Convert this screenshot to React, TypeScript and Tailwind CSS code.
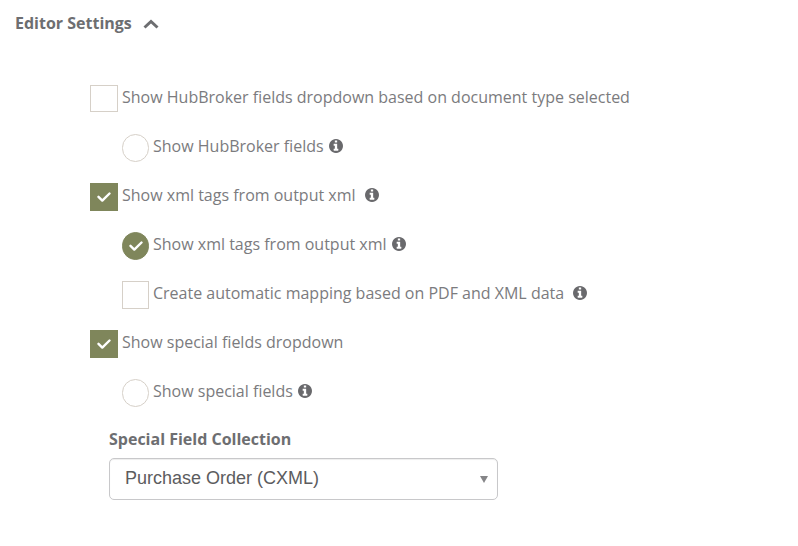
import { useState } from 'react'

type OptionProps = {
  id: string
  label: string
  type?: 'checkbox' | 'radio'
  checked: boolean
  onChange: () => void
  nested?: boolean
  info?: 'near' | 'far'
}

function InfoIcon() {
  return (
    <svg viewBox="0 128 1536 1536" className="size-3.5" fill="#69696c">
      <path d="M1024 1376v-160q0-14-9-23t-23-9h-96v-512q0-14-9-23t-23-9h-320q-14 0-23 9t-9 23v160q0 14 9 23t23 9h96v320h-96q-14 0-23 9t-9 23v160q0 14 9 23t23 9h448q14 0 23-9t9-23zm-128-896v-160q0-14-9-23t-23-9h-192q-14 0-23 9t-9 23v160q0 14 9 23t23 9h192q14 0 23-9t9-23zm640 416q0 209-103 385.5t-279.5 279.5-385.5 103-385.5-103-279.5-279.5-103-385.5 103-385.5 279.5-279.5 385.5-103 385.5 103 279.5 279.5 103 385.5z" />
    </svg>
  )
}

function Option({ id, label, type = 'checkbox', checked, onChange, nested, info }: OptionProps) {
  return (
    <div className={`flex h-[49px] items-start ${nested ? 'pl-8' : ''}`}>
      <span className="mt-0.5 grid shrink-0 place-items-center">
        <input
          id={id}
          type={type}
          name={type === 'radio' ? 'field-source' : id}
          checked={checked}
          onChange={onChange}
          className={`col-start-1 row-start-1 appearance-none border border-[#d6d0c8] bg-white checked:h-7 checked:border-[#7f865b] checked:bg-[#7f865b] ${nested ? 'h-7 w-[27px]' : 'h-[27px] w-7'} ${type === 'radio' ? 'rounded-full' : ''}`}
        />
        {checked && (
          <svg viewBox="0 0 14 10" className="pointer-events-none col-start-1 row-start-1 h-2.5 w-3.5" fill="none" stroke="white" strokeWidth="2.4" strokeLinecap="round" strokeLinejoin="round">
            <path d="M1.5 4.8 5.3 8.6 12.5 1.5" />
          </svg>
        )}
      </span>
      <label htmlFor={id} className="ml-1 leading-7">{label}</label>
      {info && (
        <button type="button" aria-label={`About: ${label}`} className={`flex h-7 items-center ${info === 'far' ? 'ml-[9px]' : 'ml-[5px]'}`}>
          <InfoIcon />
        </button>
      )}
    </div>
  )
}

export default function App() {
  const [open, setOpen] = useState(true)
  const [source, setSource] = useState('xml')
  const [flags, setFlags] = useState({ hub: false, xml: true, mapping: false, special: true })

  const toggle = (key: keyof typeof flags) => setFlags({ ...flags, [key]: !flags[key] })

  return (
    <div className="min-h-screen bg-white px-[15px] pt-[11px] font-['Open_Sans',sans-serif] text-base text-[#7b7b7e]">
      {/* Section header */}
      <h2 className="font-bold leading-6 text-[#6d6e71]">
        <button type="button" aria-expanded={open} onClick={() => setOpen(!open)} className="flex items-center gap-[11px]">
          Editor Settings
          <svg viewBox="0 0 16 10" className="mt-px h-2.5 w-4" fill="none" stroke="currentColor" strokeWidth="3">
            <path d="M1.5 8.5 8 2.5 14.5 8.5" />
          </svg>
        </button>
      </h2>

      {open && (
        <div className="pl-[75px] pt-12">
          {/* Options */}
          <Option id="hub" label="Show HubBroker fields dropdown based on document type selected" checked={flags.hub} onChange={() => toggle('hub')} />
          <Option id="source-hub" type="radio" nested label="Show HubBroker fields" info="near" checked={source === 'hub'} onChange={() => setSource('hub')} />
          <Option id="xml" label="Show xml tags from output xml" info="far" checked={flags.xml} onChange={() => toggle('xml')} />
          <Option id="source-xml" type="radio" nested label="Show xml tags from output xml" info="near" checked={source === 'xml'} onChange={() => setSource('xml')} />
          <Option id="mapping" nested label="Create automatic mapping based on PDF and XML data" info="far" checked={flags.mapping} onChange={() => toggle('mapping')} />
          <Option id="special" label="Show special fields dropdown" checked={flags.special} onChange={() => toggle('special')} />
          <Option id="source-special" type="radio" nested label="Show special fields" info="near" checked={source === 'special'} onChange={() => setSource('special')} />

          {/* Collection */}
          <div className="ml-[19px] w-full max-w-[389px] pt-px">
            <label htmlFor="collection" className="block font-bold leading-6 text-[#6d6e71]">Special Field Collection</label>
            <div className="mt-[7px] grid items-center">
              <select id="collection" className="col-start-1 row-start-1 h-[42px] w-full appearance-none rounded-[5px] border border-[#c8c8ca] bg-white px-[15px] pb-0.5 font-['Liberation_Sans',sans-serif] text-lg text-[#5c5c5e] shadow-[inset_0_1px_1px_#00000012]">
                <option>Purchase Order (CXML)</option>
              </select>
              <svg viewBox="0 0 8 7" className="pointer-events-none col-start-1 row-start-1 mr-2.5 h-[7px] w-2 justify-self-end" fill="#858588">
                <path d="M0 0h8L4 7z" />
              </svg>
            </div>
          </div>
        </div>
      )}
    </div>
  )
}
